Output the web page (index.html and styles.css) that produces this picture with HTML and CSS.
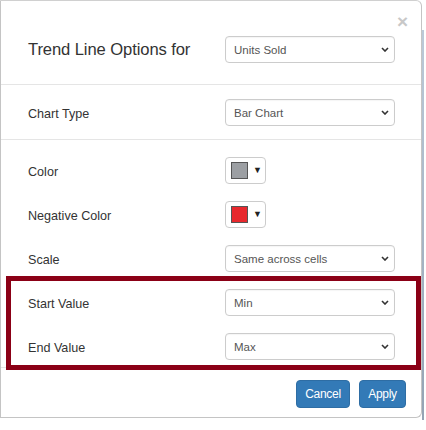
FILE: index.html
```html
<!DOCTYPE html>
<html>
<head>
<meta charset="utf-8">
<link rel="stylesheet" href="styles.css">
</head>
<body>
<div class="page">
  <div class="modal">
    <div class="close">&times;</div>
    <div class="section header">
      <div class="row">
        <div class="title">Trend Line Options for</div>
        <div class="select"><span>Units Sold</span><svg class="chev" width="8" height="5" viewBox="0 0 8 5"><path d="M1 1l3 3 3-3" fill="none" stroke="#333" stroke-width="1.6"/></svg></div>
      </div>
    </div>
    <div class="section">
      <div class="row">
        <div class="label">Chart Type</div>
        <div class="select"><span>Bar Chart</span><svg class="chev" width="8" height="5" viewBox="0 0 8 5"><path d="M1 1l3 3 3-3" fill="none" stroke="#333" stroke-width="1.6"/></svg></div>
      </div>
    </div>
    <div class="section body">
      <div class="row">
        <div class="label">Color</div>
        <div class="colorbtn"><span class="swatch grey"></span><span class="caret">&#9660;</span></div>
      </div>
      <div class="row">
        <div class="label">Negative Color</div>
        <div class="colorbtn"><span class="swatch red"></span><span class="caret">&#9660;</span></div>
      </div>
      <div class="row">
        <div class="label">Scale</div>
        <div class="select"><span>Same across cells</span><svg class="chev" width="8" height="5" viewBox="0 0 8 5"><path d="M1 1l3 3 3-3" fill="none" stroke="#333" stroke-width="1.6"/></svg></div>
      </div>
      <div class="row">
        <div class="label">Start Value</div>
        <div class="select"><span>Min</span><svg class="chev" width="8" height="5" viewBox="0 0 8 5"><path d="M1 1l3 3 3-3" fill="none" stroke="#333" stroke-width="1.6"/></svg></div>
      </div>
      <div class="row">
        <div class="label">End Value</div>
        <div class="select"><span>Max</span><svg class="chev" width="8" height="5" viewBox="0 0 8 5"><path d="M1 1l3 3 3-3" fill="none" stroke="#333" stroke-width="1.6"/></svg></div>
      </div>
    </div>
    <div class="footer">
      <button class="btn">Cancel</button>
      <button class="btn">Apply</button>
    </div>
    <div class="highlight"></div>
  </div>
  <div class="edge"></div>
</div>
</body>
</html>
```
FILE: styles.css
```css
* { box-sizing: border-box; }
html, body { margin: 0; padding: 0; background: #fff; }
body {
  font-family: "Liberation Sans", Arial, sans-serif;
  color: #333;
  width: 426px;
  height: 430px;
  overflow: hidden;
}
.page { position: relative; width: 426px; height: 430px; }
.modal {
  position: relative;
  width: 422px;
  height: 418px;
  border: 1px solid #c4c4c4;
  border-top-color: #d0d0d0;
  border-radius: 0 6px 6px 0;
  background: #fff;
}
.close {
  position: absolute;
  right: 13px;
  top: 11px;
  font-size: 19px;
  font-weight: bold;
  color: #c8c8c8;
  line-height: 1;
}
.section {
  padding: 14px 26px 13px 27px;
  border-bottom: 1px solid #e5e5e5;
}
.section.header { padding-top: 35px; padding-bottom: 21px; }
.section.body {
  padding-top: 17px;
  padding-bottom: 7px;
  display: flex;
  flex-direction: column;
  gap: 17px;
}
.row {
  display: flex;
  align-items: center;
  justify-content: space-between;
  height: 27px;
}
.title { font-size: 16.6px; letter-spacing: -0.1px; color: #333; padding-top: 1px; }
.label { font-size: 12.6px; color: #333; padding-top: 2px; }
.select {
  width: 170px;
  height: 27px;
  border: 1px solid #ccc;
  border-radius: 4px;
  display: flex;
  align-items: center;
  justify-content: space-between;
  padding: 0 5px 0 8px;
  font-size: 11.5px;
  color: #555;
  box-shadow: inset 0 1px 1px rgba(0,0,0,0.04);
}
.chev { display: block; }
.colorbtn {
  width: 41px;
  height: 27px;
  margin-right: 129px;
  border: 1px solid #ccc;
  border-radius: 4px;
  display: flex;
  align-items: center;
  padding-left: 5px;
  gap: 5px;
}
.swatch {
  width: 17px;
  height: 17px;
  border: 1px solid #555;
  display: block;
}
.swatch.grey { background: #9c9fa3; }
.swatch.red { background: #e8282d; }
.caret { font-size: 9px; color: #222; line-height: 1; }
.footer {
  display: flex;
  justify-content: flex-end;
  gap: 9px;
  padding: 12px 15px 9px 0;
}
.btn {
  height: 28px;
  padding: 0 7px;
  border: 1px solid #2e6da4;
  border-radius: 4px;
  background: #337ab7;
  color: #fff;
  font-family: "Liberation Sans", Arial, sans-serif;
  font-size: 12px;
  letter-spacing: -0.3px;
}
.btn:first-child { width: 54px; }
.btn:last-child { width: 47px; }
.highlight {
  position: absolute;
  left: 5px;
  top: 275px;
  width: 415px;
  height: 94px;
  border: 5px solid #8b0016;
}
.edge {
  position: absolute;
  left: 422px;
  top: 30px;
  width: 2px;
  height: 390px;
  background: linear-gradient(#8fa6bf, #4d6682);
  opacity: 0.6;
}
```
